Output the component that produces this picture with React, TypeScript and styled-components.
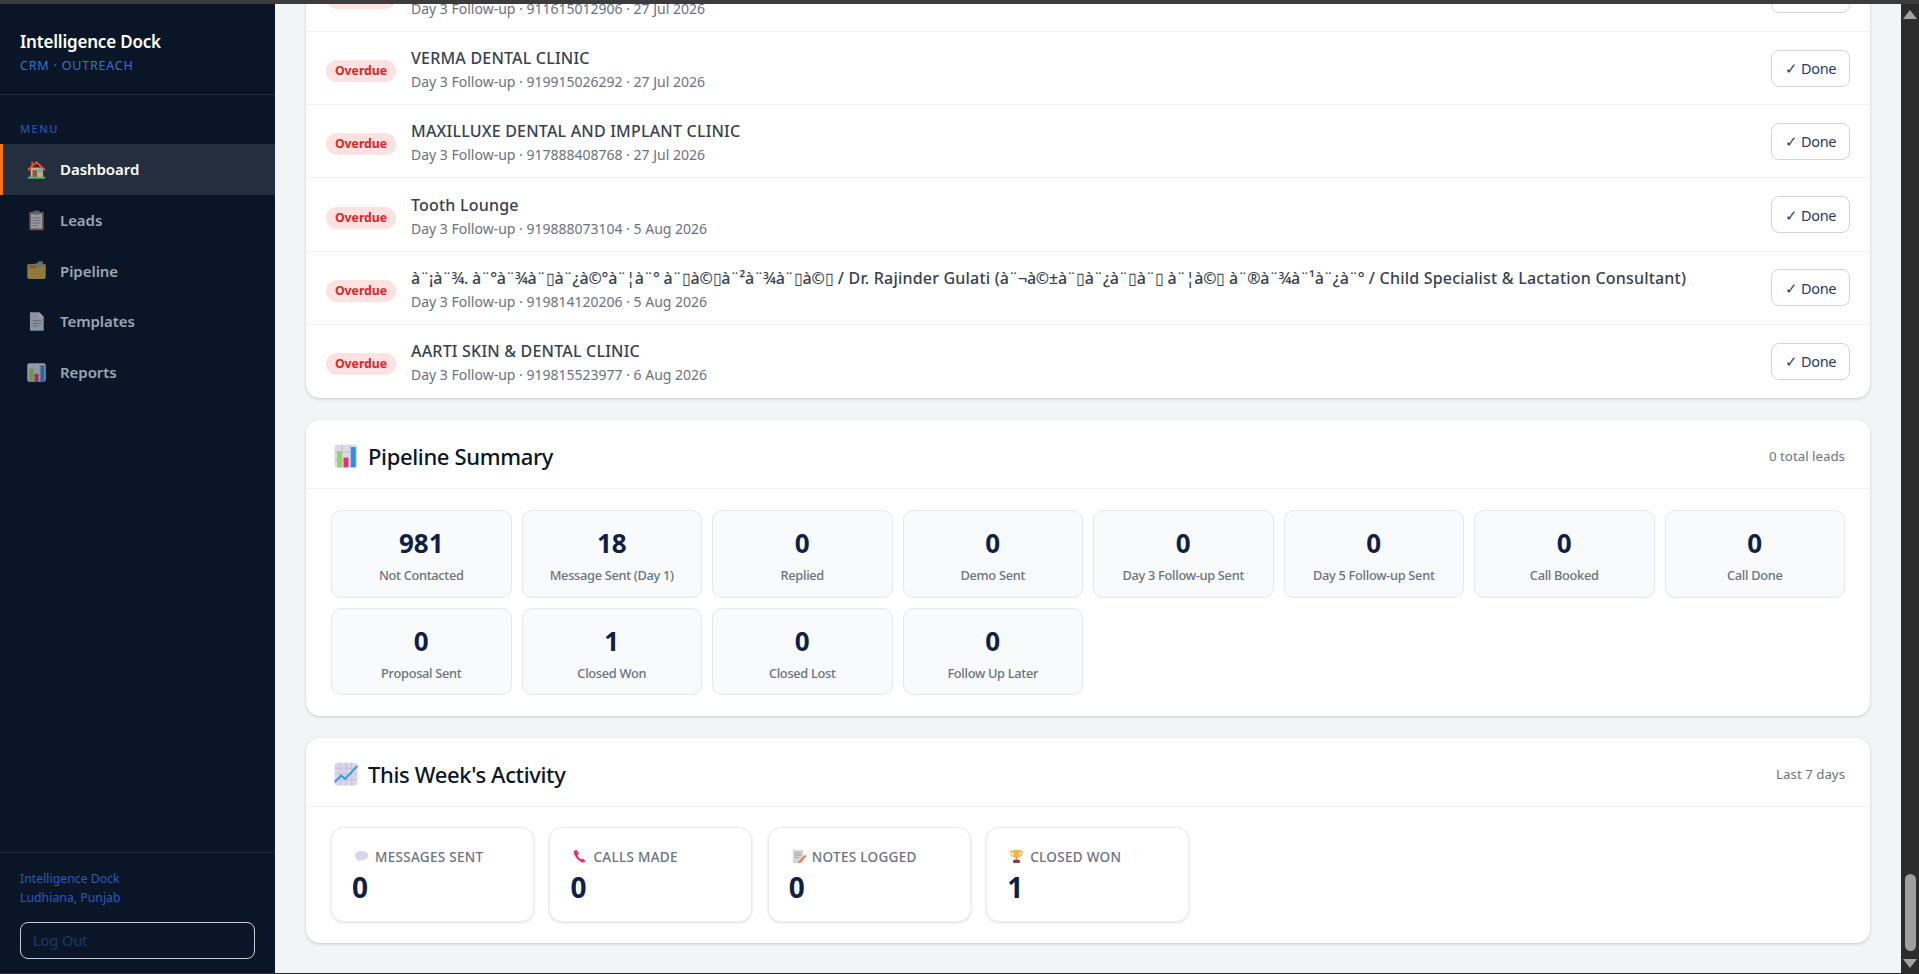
import React from 'react';
import styled, {createGlobalStyle} from 'styled-components';

const GlobalStyle = createGlobalStyle`
  html, body {
    margin: 0;
    padding: 0;
    height: 100%;
    overflow: hidden;
    background: #2c2c2c;
  }
  #root {
    height: 100%;
  }
  * {
    box-sizing: border-box;
  }
`;

const Frame = styled.div`
  display: flex;
  flex-direction: column;
  height: 974px;
  font-family: "Noto Sans", "Open Sans", "Liberation Sans", sans-serif;
`;

const WindowEdge = styled.div<{$h: number; $color: string}>`
  flex: 0 0 ${p => p.$h}px;
  background: ${p => p.$color};
`;

const Body = styled.div`
  flex: 1;
  display: flex;
  min-height: 0;
`;

const Sidebar = styled.aside`
  flex: 0 0 275px;
  display: flex;
  flex-direction: column;
  background: #0a1628;
`;

const Brand = styled.div`
  height: 91px;
  padding: 26px 20px 0;
  border-bottom: 1px solid #1e2a3b;
`;

const BrandName = styled.div`
  font-size: 17px;
  line-height: 24px;
  font-weight: 600;
  letter-spacing: -0.2px;
  color: #fff;
`;

const BrandSub = styled.div`
  margin-top: 4px;
  font-size: 12.5px;
  line-height: 16px;
  letter-spacing: 0.8px;
  color: #3b73c4;
`;

const MenuLabel = styled.div`
  margin-top: 26px;
  padding-left: 20px;
  height: 23px;
  font-size: 11px;
  line-height: 16px;
  font-weight: 500;
  letter-spacing: 1.5px;
  color: #2a52a8;
`;

const Nav = styled.nav`
  display: flex;
  flex-direction: column;
`;

const NavItem = styled.a<{$active?: boolean}>`
  display: flex;
  align-items: center;
  gap: 13px;
  height: 50.7px;
  padding-left: 23px;
  border-left: 3px solid ${p => (p.$active ? '#f97316' : 'transparent')};
  background: ${p => (p.$active ? '#232f3f' : 'transparent')};
  color: ${p => (p.$active ? '#fff' : '#9aa5b5')};
  font-size: 15px;
  font-weight: 600;
  letter-spacing: -0.05px;
`;

const NavIcon = styled.svg<{$active?: boolean}>`
  width: 21px;
  height: 21px;
  flex: none;
  opacity: ${p => (p.$active ? 1 : 0.68)};
`;

const SidebarFoot = styled.div`
  margin-top: auto;
  height: 121px;
  padding: 16px 20px 0;
  border-top: 1px solid #1e2a3b;
`;

const FootText = styled.div`
  font-size: 12.3px;
  line-height: 19px;
  color: #2a5ab8;
`;

const LogOut = styled.button`
  display: block;
  width: 235px;
  height: 37px;
  margin-top: 15px;
  padding: 0 12px 1px;
  text-align: left;
  background: transparent;
  border: 1px solid #c8ccd2;
  border-radius: 8px;
  color: #1c3664;
  font-family: inherit;
  font-size: 14.5px;
`;

const Main = styled.main`
  flex: 1;
  min-width: 0;
  display: flex;
  flex-direction: column;
  justify-content: flex-end;
  gap: 22px;
  overflow: hidden;
  padding: 0 31px 30px;
  background: #f3f4f6;
`;

const Card = styled.section`
  flex: none;
  background: #fff;
  border-radius: 14px;
  box-shadow: 0 1px 3px rgba(0, 0, 0, 0.18);
`;

const Row = styled.div`
  display: flex;
  align-items: center;
  height: 73.2px;
  padding: 0 20px;
  border-bottom: 1px solid #f0f1f3;

  &:last-child {
    border-bottom: 0;
  }
`;

const Badge = styled.span`
  flex: none;
  width: 70px;
  height: 22px;
  margin: 6px 15px 0 0;
  border-radius: 11px;
  background: #fee2e2;
  color: #dc2626;
  font-size: 12.3px;
  line-height: 22px;
  font-weight: 700;
  letter-spacing: -0.05px;
  text-align: center;
`;

const RowText = styled.div`
  flex: 1;
  min-width: 0;
  padding-top: 3px;
`;

const RowName = styled.div`
  font-size: 16px;
  line-height: 22px;
  font-weight: 500;
  letter-spacing: 0.2px;
  color: #374151;
  white-space: nowrap;
`;

const Garbled = styled.span`
  letter-spacing: -0.2px;
`;

const RowSub = styled.div`
  margin-top: 3px;
  font-size: 14px;
  line-height: 20px;
  color: #6b7280;
`;

const DoneButton = styled.button`
  flex: none;
  width: 79px;
  height: 37px;
  padding: 0;
  background: #fff;
  border: 1px solid #d1d5db;
  border-radius: 8px;
  color: #1e3a6e;
  font-family: inherit;
  font-size: 14.5px;
  letter-spacing: -0.3px;
`;

const CardHead = styled.header`
  display: flex;
  align-items: center;
  height: 69px;
  padding: 4px 25px 0 27px;
  border-bottom: 1px solid #f0f1f3;
`;

const HeadIcon = styled.svg`
  width: 26px;
  height: 26px;
  flex: none;
  margin-right: 9px;
`;

const CardTitle = styled.h2`
  margin: 0;
  font-size: 22px;
  line-height: 28px;
  font-weight: 500;
  letter-spacing: -0.35px;
  color: #0a1628;
`;

const CardNote = styled.span`
  margin-left: auto;
  font-size: 13.3px;
  color: #6b7280;
`;

const PipelineGrid = styled.div`
  display: grid;
  grid-template-columns: repeat(8, 1fr);
  gap: 10px;
  padding: 21px 25px;
`;

const PipelineTile = styled.div`
  height: 87.5px;
  padding-top: 15px;
  background: #f9fafb;
  border: 1px solid #e5e7eb;
  border-radius: 10px;
  text-align: center;
`;

const TileValue = styled.div`
  font-size: 26px;
  line-height: 34px;
  font-weight: 700;
  color: #0f2044;
`;

const TileLabel = styled.div`
  margin-top: 6px;
  font-size: 12.8px;
  line-height: 18px;
  font-weight: 500;
  letter-spacing: -0.3px;
  color: #6b7280;
`;

const ActivityRow = styled.div`
  display: flex;
  gap: 15.4px;
  padding: 20px 25px 21px;
`;

const ActivityTile = styled.div`
  width: 203px;
  height: 95px;
  padding: 19px 20px 0;
  background: #fff;
  border: 1px solid #eceef0;
  border-radius: 13px;
  box-shadow: 0 1px 3px rgba(0, 0, 0, 0.12);
`;

const ActivityLabel = styled.div`
  display: flex;
  align-items: center;
  height: 19px;
  font-size: 13.5px;
  font-weight: 500;
  letter-spacing: 0.3px;
  color: #6b7280;
`;

const ActivityIcon = styled.svg`
  width: 15px;
  height: 15px;
  flex: none;
  margin: 0 6px 0 2px;
`;

const ActivityValue = styled.div`
  margin-top: 4px;
  font-size: 28px;
  line-height: 34px;
  font-weight: 700;
  color: #0f2044;
`;

const Scrollbar = styled.div`
  flex: 0 0 18px;
  display: flex;
  flex-direction: column;
  align-items: center;
  background: #2c2c2c;
`;

const ScrollArrow = styled.svg<{$down?: boolean}>`
  width: 14px;
  height: 9px;
  flex: none;
  margin: ${p => (p.$down ? '8px 0 5px' : '6px 0 8px')};
`;

const ScrollThumb = styled.div`
  flex: none;
  width: 11px;
  height: 77px;
  margin-top: auto;
  border-radius: 6px;
  background: #9f9f9f;
`;

const HouseIcon = (
  <>
    <rect x="7" y="13" width="19" height="15" fill="#d9a878"/>
    <rect x="8" y="4" width="3" height="8" fill="#c9502f"/>
    <path d="M16 3 2 16l2 2L16 7l12 11 2-2z" fill="#e8562f"/>
    <rect x="10" y="17" width="7" height="11" fill="#8a5a44"/>
    <rect x="19" y="15" width="6" height="6" fill="#38b6ea"/>
    <rect x="3" y="27" width="26" height="3" fill="#4cba6e"/>
  </>
);

const ClipboardIcon = (
  <>
    <rect x="5" y="3" width="22" height="28" rx="2" fill="#a9704a"/>
    <rect x="7.5" y="6" width="17" height="22" fill="#d5d8de"/>
    <rect x="11" y="1" width="10" height="6" rx="1.5" fill="#7b8494"/>
    <path d="M10 12h12M10 16h12M10 20h12M10 24h8" stroke="#8f96a3" strokeWidth="1.4"/>
  </>
);

const FolderBoxIcon = (
  <>
    <rect x="18" y="2" width="8" height="6" rx="1" fill="#5aa469"/>
    <rect x="2" y="6" width="28" height="23" rx="3" fill="#cfa94a"/>
    <rect x="2" y="6" width="28" height="5" rx="2" fill="#b8963f"/>
    <rect x="14" y="5" width="9" height="5" fill="#8ea3a8"/>
    <rect x="6" y="10" width="9" height="1.6" fill="#c9413a"/>
  </>
);

const PageIcon = (
  <>
    <path d="M6 2h14l7 7v21H6z" fill="#c9ccd6"/>
    <path d="M20 2l7 7h-7z" fill="#e6e8ee"/>
    <path d="M10 15h13M10 19h13M10 23h9" stroke="#8b8f9c" strokeWidth="1.6"/>
  </>
);

const BarsIcon = (
  <>
    <rect x="2" y="2" width="28" height="28" rx="3" fill="#dcd9e4"/>
    <path d="M11 2v28M21 2v28M2 11h28M2 21h28" stroke="#c3bfcf" strokeWidth="1"/>
    <rect x="5" y="10" width="6" height="20" fill="#8fd46c"/>
    <rect x="13" y="18" width="6" height="12" fill="#e5316f"/>
    <rect x="22" y="5" width="6" height="25" fill="#2d8fe0"/>
  </>
);

const TrendIcon = (
  <>
    <rect x="2" y="2" width="28" height="28" rx="3" fill="#dcd5e8"/>
    <path d="M9 2v28M16 2v28M23 2v28M2 9h28M2 16h28M2 23h28" stroke="#c3bad6" strokeWidth="1"/>
    <path d="M2 26l8-8 5 4L30 6" fill="none" stroke="#2f9be6" strokeWidth="2.4"/>
  </>
);

const BubbleIcon = (
  <>
    <ellipse cx="16" cy="14" rx="14" ry="10" fill="#dcd2ee"/>
    <path d="M9 21l-1 6 8-4z" fill="#dcd2ee"/>
  </>
);

const PhoneIcon = (
  <path
    d="M5 3c-2 2-2 6 1 11 3 6 8 11 14 14 3 1 7 1 9-2l-6-6-4 2c-3-2-6-5-7-9l3-3-5-8z"
    fill="#e6327e"
  />
);

const MemoIcon = (
  <>
    <rect x="4" y="2" width="22" height="28" fill="#d5d3dc"/>
    <path d="M8 8h14M8 13h14M8 18h8" stroke="#908e9c" strokeWidth="1.6"/>
    <path d="M30 12 17 26l-2 5 5-2 13-14z" fill="#f2762e"/>
  </>
);

const TrophyIcon = (
  <>
    <path d="M4 5h24v3c0 5-4 8-7 8H11C8 16 4 13 4 8z" fill="none" stroke="#f0a830" strokeWidth="2.4"/>
    <path d="M9 2h14v10c0 4-3 7-7 7s-7-3-7-7z" fill="#f6b63a"/>
    <rect x="14" y="18" width="4" height="5" fill="#d9942a"/>
    <rect x="9" y="23" width="14" height="7" fill="#8a3b4a"/>
  </>
);

const navItems = [
  {label: 'Dashboard', icon: HouseIcon, active: true},
  {label: 'Leads', icon: ClipboardIcon},
  {label: 'Pipeline', icon: FolderBoxIcon},
  {label: 'Templates', icon: PageIcon},
  {label: 'Reports', icon: BarsIcon},
];

const followUps = [
  {name: 'SMILE CARE DENTAL', sub: 'Day 3 Follow-up · 911615012906 · 27 Jul 2026'},
  {name: 'VERMA DENTAL CLINIC', sub: 'Day 3 Follow-up · 919915026292 · 27 Jul 2026'},
  {name: 'MAXILLUXE DENTAL AND IMPLANT CLINIC', sub: 'Day 3 Follow-up · 917888408768 · 27 Jul 2026'},
  {name: 'Tooth Lounge', sub: 'Day 3 Follow-up · 919888073104 · 5 Aug 2026'},
  {
    name: (
      <>
        <Garbled>à¨¡à¨¾. à¨°à¨¾à¨▯à¨¿à©°à¨¦à¨° à¨▯à©▯à¨²à¨¾à¨▯à©▯</Garbled>
        {' / Dr. Rajinder Gulati ('}
        <Garbled>à¨¬à©±à¨▯à¨¿à¨▯à¨▯ à¨¦à©▯ à¨®à¨¾à¨¹à¨¿à¨°</Garbled>
        {' / Child Specialist & Lactation Consultant)'}
      </>
    ),
    sub: 'Day 3 Follow-up · 919814120206 · 5 Aug 2026',
  },
  {name: 'AARTI SKIN & DENTAL CLINIC', sub: 'Day 3 Follow-up · 919815523977 · 6 Aug 2026'},
];

const pipeline = [
  {value: 981, label: 'Not Contacted'},
  {value: 18, label: 'Message Sent (Day 1)'},
  {value: 0, label: 'Replied'},
  {value: 0, label: 'Demo Sent'},
  {value: 0, label: 'Day 3 Follow-up Sent'},
  {value: 0, label: 'Day 5 Follow-up Sent'},
  {value: 0, label: 'Call Booked'},
  {value: 0, label: 'Call Done'},
  {value: 0, label: 'Proposal Sent'},
  {value: 1, label: 'Closed Won'},
  {value: 0, label: 'Closed Lost'},
  {value: 0, label: 'Follow Up Later'},
];

const activity = [
  {label: 'MESSAGES SENT', value: 0, icon: BubbleIcon},
  {label: 'CALLS MADE', value: 0, icon: PhoneIcon},
  {label: 'NOTES LOGGED', value: 0, icon: MemoIcon},
  {label: 'CLOSED WON', value: 1, icon: TrophyIcon},
];

export default function App() {
  return (
    <Frame>
      <GlobalStyle/>
      <WindowEdge $h={4} $color="#3c3c3c"/>
      <Body>
        <Sidebar>
          <Brand>
            <BrandName>Intelligence Dock</BrandName>
            <BrandSub>CRM · OUTREACH</BrandSub>
          </Brand>
          <MenuLabel>MENU</MenuLabel>
          <Nav>
            {navItems.map(item => (
              <NavItem key={item.label} $active={item.active}>
                <NavIcon viewBox="0 0 32 32" $active={item.active}>{item.icon}</NavIcon>
                {item.label}
              </NavItem>
            ))}
          </Nav>
          <SidebarFoot>
            <FootText>Intelligence Dock</FootText>
            <FootText>Ludhiana, Punjab</FootText>
            <LogOut>Log Out</LogOut>
          </SidebarFoot>
        </Sidebar>
        <Main>
          <Card>
            {followUps.map(row => (
              <Row key={row.sub}>
                <Badge>Overdue</Badge>
                <RowText>
                  <RowName>{row.name}</RowName>
                  <RowSub>{row.sub}</RowSub>
                </RowText>
                <DoneButton>✓ Done</DoneButton>
              </Row>
            ))}
          </Card>
          <Card>
            <CardHead>
              <HeadIcon viewBox="0 0 32 32">{BarsIcon}</HeadIcon>
              <CardTitle>Pipeline Summary</CardTitle>
              <CardNote>0 total leads</CardNote>
            </CardHead>
            <PipelineGrid>
              {pipeline.map(tile => (
                <PipelineTile key={tile.label}>
                  <TileValue>{tile.value}</TileValue>
                  <TileLabel>{tile.label}</TileLabel>
                </PipelineTile>
              ))}
            </PipelineGrid>
          </Card>
          <Card>
            <CardHead>
              <HeadIcon viewBox="0 0 32 32">{TrendIcon}</HeadIcon>
              <CardTitle>This Week's Activity</CardTitle>
              <CardNote>Last 7 days</CardNote>
            </CardHead>
            <ActivityRow>
              {activity.map(tile => (
                <ActivityTile key={tile.label}>
                  <ActivityLabel>
                    <ActivityIcon viewBox="0 0 32 32">{tile.icon}</ActivityIcon>
                    {tile.label}
                  </ActivityLabel>
                  <ActivityValue>{tile.value}</ActivityValue>
                </ActivityTile>
              ))}
            </ActivityRow>
          </Card>
        </Main>
        <Scrollbar>
          <ScrollArrow viewBox="0 0 14 9"><path d="M7 0l7 9H0z" fill="#a3a3a3"/></ScrollArrow>
          <ScrollThumb/>
          <ScrollArrow viewBox="0 0 14 9" $down><path d="M0 0h14L7 9z" fill="#a3a3a3"/></ScrollArrow>
        </Scrollbar>
      </Body>
      <WindowEdge $h={1} $color="#2c2c2c"/>
    </Frame>
  );
}
